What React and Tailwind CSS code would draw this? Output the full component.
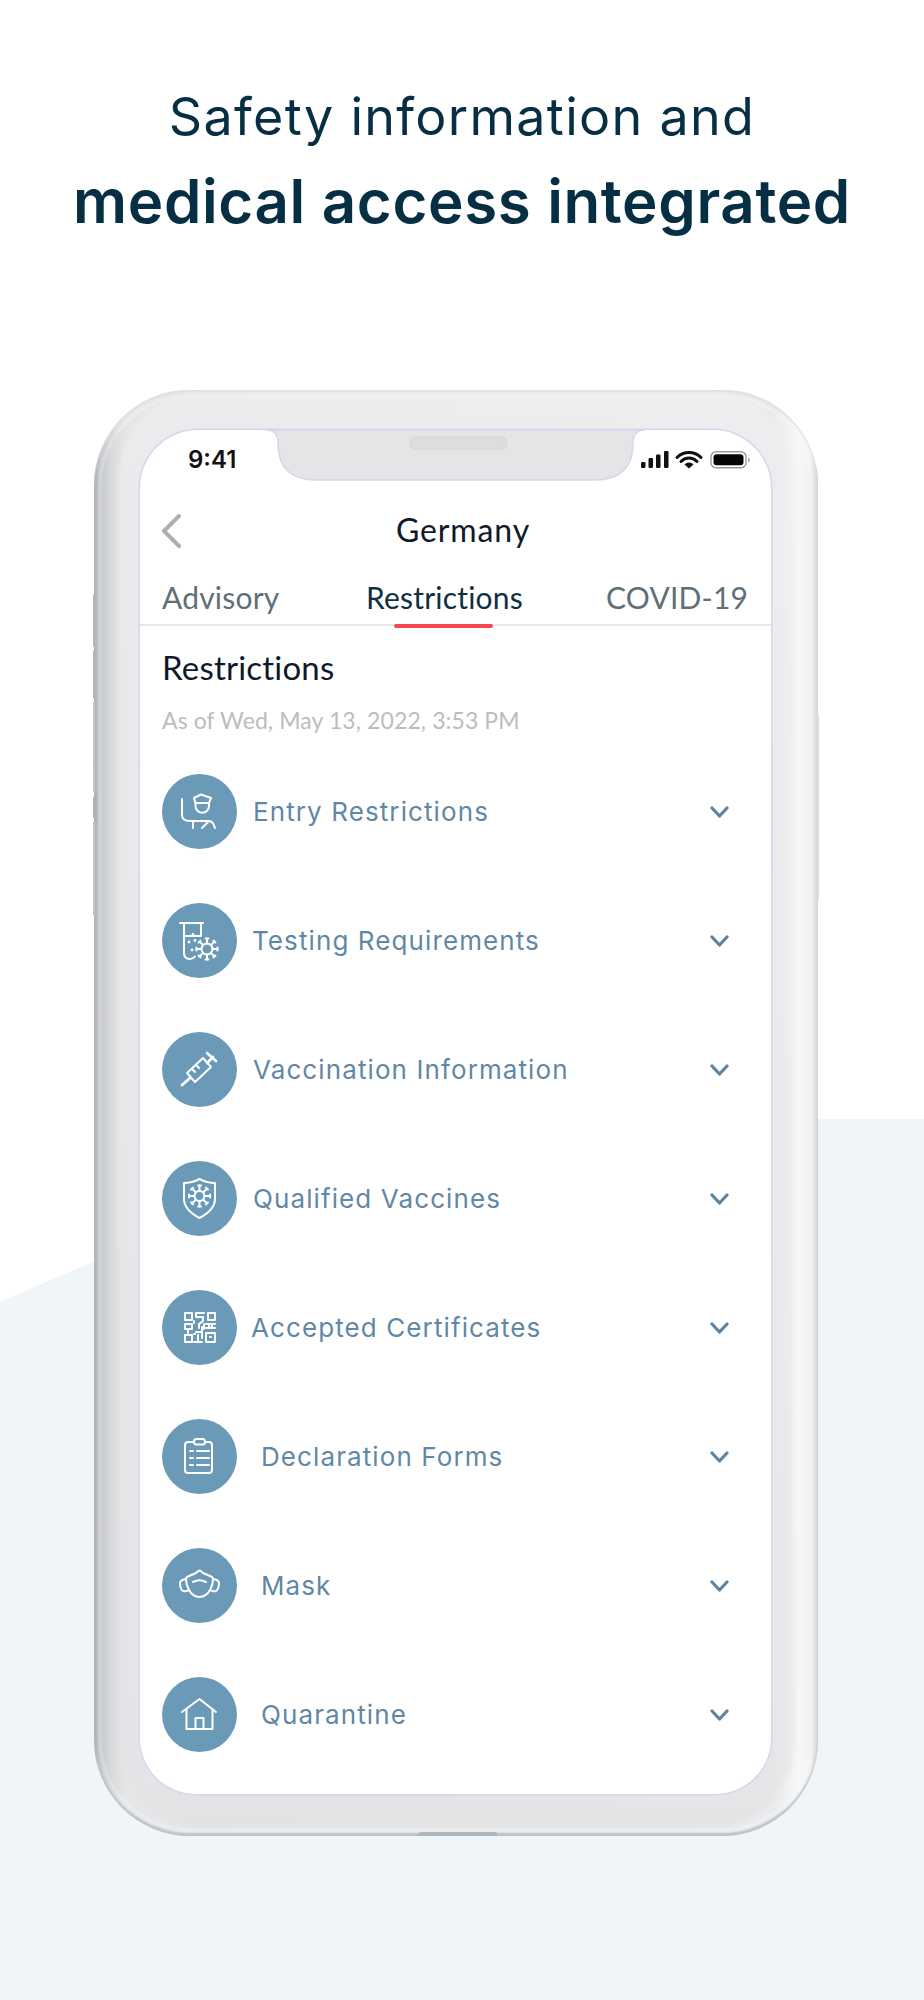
import React from 'react';

const VirusMark = ({ cx, cy, r, spike }) => {
  const angles = [0, 45, 90, 135, 180, 225, 270, 315];
  return (
    <g>
      <circle cx={cx} cy={cy} r={r} />
      {angles.map((a) => {
        const c = Math.cos((a * Math.PI) / 180);
        const s = Math.sin((a * Math.PI) / 180);
        return (
          <g key={a}>
            <line x1={cx + r * c} y1={cy + r * s} x2={cx + spike * c} y2={cy + spike * s} />
            <line
              x1={cx + spike * c - 1.4 * s}
              y1={cy + spike * s + 1.4 * c}
              x2={cx + spike * c + 1.4 * s}
              y2={cy + spike * s - 1.4 * c}
            />
          </g>
        );
      })}
    </g>
  );
};

const icons = {
  officer: (
    <>
      <path d="M20 25v16q0 6 8 6h19q4 0 6 7" />
      <path d="M31 47v7M40 54l7-7" />
      <path d="M32 24l7-3.500 10 3.500-2 5H33.500z" />
      <path d="M33.500 29v3a6.700 6.700 0 0 0 13.500 0v-3" />
    </>
  ),
  tube: (
    <>
      <path d="M18 20h23M22 20v30q0 6 6 6 3 0 5-2.500M39 20v13M22 33h17" />
      <path d="M31 31.500h.01M27 39h.01M30 47h.01M33 37.500h.01" strokeWidth="2.800" />
      <VirusMark cx={45} cy={46} r={5.500} spike={10.500} />
    </>
  ),
  syringe: (
    <>
      <path d="M20 53l8-7" strokeWidth="2.800" />
      <path d="M25 41l16-15 8 9-16 15z" />
      <path d="M45 31l6-6M45 21l9 8" strokeWidth="2.600" />
      <path d="M30 37l3 3M34 33l3 3" />
    </>
  ),
  shield: (
    <>
      <path d="M37.500 18C32 21 27 22 22 22v16c0 9 8 15 15.500 19C45 53 53 47 53 38V22c-5 0-10-1-15.500-4z" />
      <VirusMark cx={37.500} cy={35} r={5} spike={10.500} />
    </>
  ),
  qr: (
    <>
      <path d="M23 23h7v7h-7zM46 23h7v7h-7zM23 45h7v7h-7z" />
      <path d="M34 23h8M34 23v4h7v4l-4 3v4M23 34h7v5h-7zM26 43v-4M34 42h6v-5M44 34h9M44 38h9M47 34v4M50 34v4M36 45v7M32 52h8M40 42v6M44 43h9v9h-9zM42 34v5M32 31v2M32 44h1M48 47h1" />
    </>
  ),
  clipboard: (
    <>
      <path d="M32 23h-6q-3 0-3 3v25q0 3 3 3h21q3 0 3-3V26q0-3-3-3h-4" />
      <rect x="32" y="20" width="11" height="5.500" rx="2.500" />
      <path d="M28 32h3M28 39h3M28 46h3M35 32h12M35 39h12M35 46h12" strokeWidth="2" />
    </>
  ),
  mask: (
    <>
      <path d="M24 31q0-2 3-3l7-3q1-1.500 3.500-2.500 2.500 1 3.500 2.500l7 3q3 1 3 3 0 6-3 11-4 7-10.500 7T27 42q-3-5-3-11z" />
      <path d="M24 31q-6 1-6 4 0 6 3 8 3 1 6-1M51 31q6 1 6 4 0 6-3 8-3 1-6-1" />
      <path d="M31 34q6.500-3.500 13 0" />
    </>
  ),
  house: (
    <>
      <path d="M20 35l17.500-13L54 35" />
      <path d="M24.500 32v20h26V32M33.500 52V41h8v11" />
    </>
  ),
};

const rows = [
  { label: 'Entry Restrictions', icon: 'officer', textClass: 'ml-[16px]' },
  { label: 'Testing Requirements', icon: 'tube', textClass: 'ml-[15px]' },
  { label: 'Vaccination Information', icon: 'syringe', textClass: 'ml-[16px]' },
  { label: 'Qualified Vaccines', icon: 'shield', textClass: 'ml-[16px]' },
  { label: 'Accepted Certificates', icon: 'qr', textClass: 'ml-[14px]' },
  { label: 'Declaration Forms', icon: 'clipboard', textClass: 'ml-[24px]' },
  { label: 'Mask', icon: 'mask', textClass: 'ml-[24px]' },
  { label: 'Quarantine', icon: 'house', textClass: 'ml-[24px]' },
];

function RestrictionRow({ label, icon, textClass }) {
  return (
    <div className="flex h-[129px] items-center pl-[22px] pr-[42px]">
      <div className="h-[75px] w-[75px] shrink-0 rounded-full bg-[#6a9ab7]">
        <svg viewBox="0 0 75 75" className="h-[75px] w-[75px]" fill="none" stroke="#ffffff" strokeWidth="2" strokeLinecap="round" strokeLinejoin="round">
          {icons[icon]}
        </svg>
      </div>
      <span className={`${textClass} [font-family:Inter,sans-serif] text-[26px] leading-none tracking-[1.100px] text-[#5f88a6]`}>{label}</span>
      <svg viewBox="0 0 19 12" className="ml-auto h-[12px] w-[19px]" fill="none" stroke="#5a84a0" strokeWidth="3.200" strokeLinecap="round" strokeLinejoin="round">
        <path d="M2 2l7.500 8L17 2" />
      </svg>
    </div>
  );
}

function StatusIcons() {
  return (
    <svg viewBox="0 0 111 18" className="h-[18px] w-[111px]">
      <rect x="0" y="11" width="4.500" height="6" rx="1.200" fill="#111" />
      <rect x="7.500" y="7" width="4.500" height="10" rx="1.200" fill="#111" />
      <rect x="15" y="3.500" width="4.500" height="13.500" rx="1.200" fill="#111" />
      <rect x="23" y="0" width="4.500" height="17" rx="1.200" fill="#111" />
      <path d="M36 6.500a17 17 0 0 1 24 0M40 10.500a11 11 0 0 1 16 0" fill="none" stroke="#111" strokeWidth="3" strokeLinecap="round" />
      <path d="M43.500 13.500l4.500 4 4.500-4a6 6 0 0 0-9 0z" fill="#111" />
      <rect x="70" y="0.800" width="35" height="16" rx="5" fill="none" stroke="#9a9a9a" strokeWidth="1.400" />
      <rect x="72.500" y="3.300" width="30" height="11" rx="3" fill="#050505" />
      <path d="M107 6.500q2 1 2 2.500t-2 2.500z" fill="#a8a8a8" />
    </svg>
  );
}

function PhoneScreen() {
  return (
    <div className="relative h-[1364px] w-[631px] overflow-hidden rounded-t-[58px] rounded-b-[56px] bg-white shadow-[0_0_0_1.500px_#d8d4ec] [font-family:Lato,sans-serif]">
      <svg viewBox="0 0 379 52" className="absolute left-[126px] top-[-1px] h-[52px] w-[379px]">
        <path d="M0 1q12 0 12 13 0 37 38 37h279q38 0 38-37 0-13 12-13z" fill="#e4e5e7" stroke="#d8d4ec" strokeWidth="1.500" />
        <rect x="144" y="8" width="97" height="12" rx="6" fill="#dcddde" stroke="#d4d5d6" />
      </svg>

      <div className="relative flex h-[58px] items-center justify-between pl-[48px] pr-[19px] pt-[2px]">
        <span className="[font-family:Inter,sans-serif] text-[24px] font-semibold leading-none text-[#111]">9:41</span>
        <StatusIcons />
      </div>

      <div className="relative flex h-[88px] items-center justify-center pb-[4px]">
        <svg viewBox="0 0 20 34" className="absolute left-[21px] top-[26px] h-[34px] w-[20px]" fill="none" stroke="#aeaeae" strokeWidth="4" strokeLinecap="round" strokeLinejoin="round">
          <path d="M18 2L3 17l15 15" />
        </svg>
        <span className="ml-[15px] text-[32px] leading-none tracking-[0.900px] text-[#10182b]">Germany</span>
      </div>

      <div className="relative flex h-[50px] items-center border-b-2 border-[#e6e7e8] pb-[6px] pl-[22px] text-[30px] leading-none tracking-[0.200px] text-[#5f6f78]">
        <span className="w-[204px]">Advisory</span>
        <span className="w-[240px] text-[#0f2f42]">Restrictions</span>
        <span>COVID-19</span>
        <div className="absolute bottom-[-4px] left-[254px] h-[4px] w-[99px] rounded-full bg-[#f4474f]" />
      </div>

      <h2 className="mt-[23px] pl-[22px] text-[33px] font-normal leading-[36px] tracking-[0.2px] text-[#10182b]">Restrictions</h2>
      <p className="mt-[22px] pl-[22px] text-[23px] leading-[26px] tracking-[0.1px] text-[#b9bdbf]">As of Wed, May 13, 2022, 3:53 PM</p>

      <div className="mt-[14px]">
        {rows.map((row) => (
          <RestrictionRow key={row.label} {...row} />
        ))}
      </div>
    </div>
  );
}

function PhoneFrame() {
  return (
    <div className="relative ml-[94px] h-[1446px] w-[724px] rounded-t-[95px] rounded-b-[96px] bg-[linear-gradient(to_right,#a9acb3_0px,#c3c5c9_5px,#d6d8da_16px,#e4e5e7_30px,#e6e7e9_46px,#eaebed_680px,#f7f7f7_705px,#f1f2f2_716px,#d6d7d9_724px)] shadow-[inset_0_-3px_2px_#bcc2cc,inset_0_2px_1px_#dfe0e2]">
      <div className="absolute inset-x-[24px] bottom-[8px] top-[4px] rounded-t-[84px] rounded-b-[82px] bg-[linear-gradient(to_bottom,#f0f1f1_0%,#eeefef_3%,#e9eaeb_50%,#e3e4e6_97%,#dfe0e2_100%)] opacity-60 blur-[2px]" />
      <div className="absolute inset-[5px] rounded-t-[90px] rounded-b-[91px] border-2 border-white/40 blur-[1px]" />
      <div className="absolute left-[-1px] top-[203px] h-[55px] w-[3px] rounded-l-sm bg-[#b4b6bc]" />
      <div className="absolute left-[-1px] top-[259px] h-[51px] w-[3px] rounded-l-sm bg-[#b4b6bc]" />
      <div className="absolute left-[-1px] top-[312px] h-[90px] w-[2px] bg-[#c3c5ca]" />
      <div className="absolute left-[-1px] top-[405px] h-[25px] w-[4px] rounded-l-sm bg-[#aeb0b7]" />
      <div className="absolute left-[-1px] top-[432px] h-[93px] w-[2px] bg-[#c3c5ca]" />
      <div className="absolute right-[-1px] top-[325px] h-[185px] w-[2px] bg-[#dcdde0]" />
      <div className="absolute bottom-0 left-[324px] h-[4px] w-[80px] rounded-t-md bg-[#aeb5c3]" />
      <div className="absolute left-[46px] top-[40px]">
        <PhoneScreen />
      </div>
    </div>
  );
}

export default function App() {
  return (
    <div className="relative h-[2000px] w-[924px] overflow-hidden bg-white">
      <svg viewBox="0 0 924 2000" className="absolute inset-0 h-[2000px] w-[924px]">
        <path d="M0 1302L120 1250 400 1119H924V2000H0z" fill="#f0f5f8" />
      </svg>

      <div className="relative">
        <header className="pt-[85px] text-center [font-family:Inter,sans-serif] text-[#062f44]">
          <h1 className="text-[52px] font-normal leading-[64px] tracking-[1.300px]">Safety information and</h1>
          <p className="mt-[17px] text-[60px] font-semibold leading-[70px] tracking-[0.650px]">medical access integrated</p>
        </header>
        <div className="mt-[154px]">
          <PhoneFrame />
        </div>
      </div>
    </div>
  );
}
